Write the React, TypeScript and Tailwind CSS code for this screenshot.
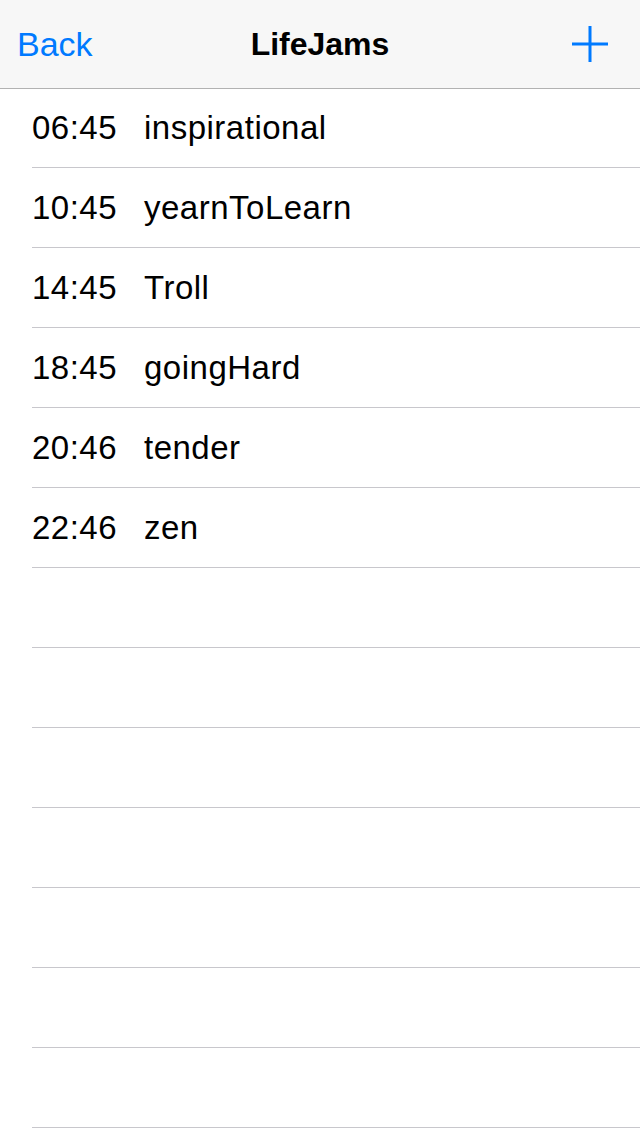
import React from 'react';

const jams = [
    {time: '06:45', name: 'inspirational'},
    {time: '10:45', name: 'yearnToLearn'},
    {time: '14:45', name: 'Troll'},
    {time: '18:45', name: 'goingHard'},
    {time: '20:46', name: 'tender'},
    {time: '22:46', name: 'zen'},
];

const emptyRows = 7;

export default function App() {
    return (
        <div className="w-[640px] h-[1136px] bg-white overflow-hidden" style={{fontFamily: '"Liberation Sans", Arial, sans-serif'}}>
            <div className="h-[89px] bg-[#f7f7f7] border-b border-[#b2b2b2] flex items-center justify-between relative">
                <span className="pl-[17px] text-[34px] text-[#007aff]">Back</span>
                <span className="absolute left-0 right-0 text-center text-[32px] font-bold text-black pointer-events-none">LifeJams</span>
                <svg width="36" height="36" viewBox="0 0 36 36" className="mr-[32px]">
                    <rect x="16.5" y="0" width="3" height="36" fill="#007aff"/>
                    <rect x="0" y="16.5" width="36" height="3" fill="#007aff"/>
                </svg>
            </div>
            <div className="pl-8">
                {jams.map((j, i) => (
                    <div
                        key={j.time}
                        className={(i === 0 ? 'h-[79px] ' : 'h-[80px] ') + 'border-b border-[#c8c7cc] flex items-center text-[33px] tracking-[0.5px] text-black'}
                    >
                        <span className="w-[112px]">{j.time}</span>
                        <span>{j.name}</span>
                    </div>
                ))}
                {Array.from({length: emptyRows}).map((_, i) => (
                    <div key={i} className="h-[80px] border-b border-[#c8c7cc]"/>
                ))}
            </div>
        </div>
    );
}
